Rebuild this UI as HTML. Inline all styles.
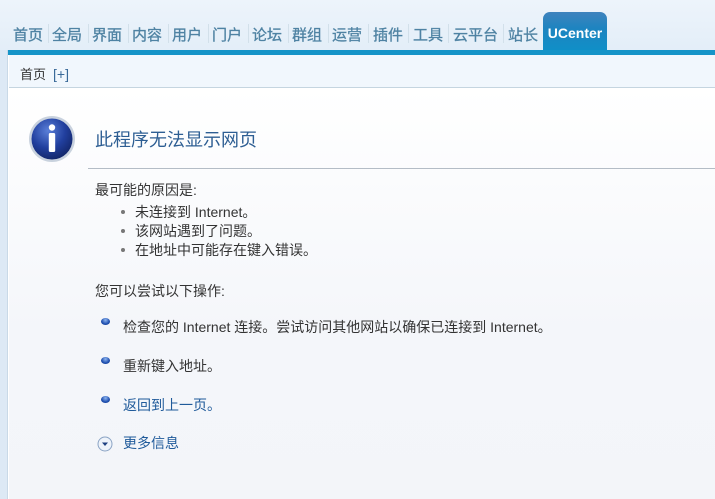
<!DOCTYPE html>
<html><head><meta charset="utf-8"><style>
*{margin:0;padding:0;box-sizing:border-box}
body{width:715px;height:499px;overflow:hidden;position:relative;font-family:"Liberation Sans","Microsoft YaHei","Noto Sans CJK SC",sans-serif;background:#fff}
.top{position:absolute;left:0;top:0;width:715px;height:50px;background:linear-gradient(#edf4fb,#e3eef8)}
.nav{position:absolute;top:24px;left:0;height:20px;font-size:15px;color:#4f83a3;white-space:nowrap;-webkit-text-stroke:0.3px #4f83a3}
.nav span{position:absolute;top:0}
.sep{position:absolute;top:24px;width:1px;height:19px;background:#d2e0ea}
.uc{position:absolute;left:543px;top:12px;width:64px;height:40px;border-radius:7px 7px 0 0;background:linear-gradient(#3f83bd,#1e84c0 40%,#0f90c8);color:#fff;font-weight:bold;font-size:14px;text-align:center;padding-top:13px}
.bar{position:absolute;left:8px;top:50px;width:707px;height:5px;background:#1594c8}
.left{position:absolute;left:0;top:50px;width:8px;height:449px;background:#dde9f5;border-right:1px solid #c9d9e7}
.crumb{position:absolute;left:9px;top:55px;width:706px;height:33px;background:#f1f7fd;border-bottom:1px solid #c5d5e0;font-size:13px;color:#333;padding:9px 0 0 11px}
.crumb b{font-weight:normal;color:#3a6a99;margin-left:7px;font-size:14px}
.content{position:absolute;left:9px;top:88px;width:706px;height:411px;background:linear-gradient(#fff,#f4f6fa 60%,#f3f5f9)}
.t{position:absolute;font-size:14px;color:#333;white-space:nowrap}
.title{position:absolute;left:95px;top:126px;font-size:18px;color:#2d5e93}
.hr{position:absolute;left:88px;top:168px;width:627px;height:1px;background:#b4bcc6}
.dot{position:absolute;width:4px;height:4px;border-radius:50%;background:#777}
.bb{position:absolute;width:9px;height:7px;border-radius:50%;background:radial-gradient(circle at 50% 30%,#8fb6f0,#1e4fb0 60%,#0d3480)}
a{color:#1f5a9a;text-decoration:none}
</style></head><body>
<div class="top"></div>
<div class="nav">
<span style="left:13px">首页</span><span style="left:52px">全局</span><span style="left:92px">界面</span><span style="left:132px">内容</span><span style="left:172px">用户</span><span style="left:212px">门户</span><span style="left:252px">论坛</span><span style="left:292px">群组</span><span style="left:332px">运营</span><span style="left:373px">插件</span><span style="left:413px">工具</span><span style="left:453px">云平台</span><span style="left:508px">站长</span>
</div>
<div class="sep" style="left:48px"></div><div class="sep" style="left:88px"></div><div class="sep" style="left:128px"></div><div class="sep" style="left:168px"></div><div class="sep" style="left:208px"></div><div class="sep" style="left:248px"></div><div class="sep" style="left:288px"></div><div class="sep" style="left:328px"></div><div class="sep" style="left:368px"></div><div class="sep" style="left:408px"></div><div class="sep" style="left:448px"></div><div class="sep" style="left:503px"></div>
<div class="uc">UCenter</div>
<div class="bar"></div>
<div class="left"></div>
<div class="crumb">首页<b>[+]</b></div>
<div class="content"></div>
<svg style="position:absolute;left:28px;top:115px" width="48" height="48" viewBox="0 0 48 48">
<defs><radialGradient id="g" cx="40%" cy="30%" r="70%"><stop offset="0" stop-color="#5a7fd8"/><stop offset="0.6" stop-color="#213f9e"/><stop offset="1" stop-color="#14286e"/></radialGradient></defs>
<circle cx="24" cy="24" r="23" fill="#c9d2de"/><circle cx="24" cy="24" r="20.5" fill="url(#g)"/>
<circle cx="24" cy="12.5" r="3.2" fill="#fff"/><rect x="20.8" y="18" width="6.4" height="19" rx="1.5" fill="#fff"/>
</svg>
<div class="title">此程序无法显示网页</div>
<div class="hr"></div>
<div class="t" style="left:95px;top:180px">最可能的原因是:</div>
<div class="dot" style="left:121px;top:210px"></div><div class="t" style="left:135px;top:202px">未连接到 Internet。</div>
<div class="dot" style="left:121px;top:229px"></div><div class="t" style="left:135px;top:221px">该网站遇到了问题。</div>
<div class="dot" style="left:121px;top:248px"></div><div class="t" style="left:135px;top:240px">在地址中可能存在键入错误。</div>
<div class="t" style="left:95px;top:281px">您可以尝试以下操作:</div>
<div class="bb" style="left:101px;top:318px"></div><div class="t" style="left:123px;top:317px">检查您的 Internet 连接。尝试访问其他网站以确保已连接到 Internet。</div>
<div class="bb" style="left:101px;top:357px"></div><div class="t" style="left:123px;top:356px">重新键入地址。</div>
<div class="bb" style="left:101px;top:396px"></div><div class="t" style="left:123px;top:395px"><a>返回到上一页。</a></div>
<svg style="position:absolute;left:97px;top:436px" width="16" height="16" viewBox="0 0 16 16"><circle cx="8" cy="8" r="7" fill="#eef3fa" stroke="#8aa3c4"/><path d="M5 6.5h6L8 10z" fill="#1d3f80"/></svg>
<div class="t" style="left:123px;top:433px"><a>更多信息</a></div>
</body></html>
